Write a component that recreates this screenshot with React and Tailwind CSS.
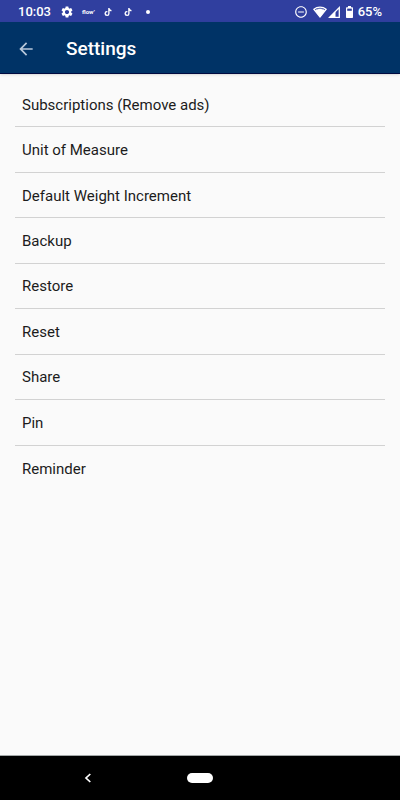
import { MdSettings, MdRemoveCircleOutline, MdArrowBack } from 'react-icons/md';
import { FaTiktok } from 'react-icons/fa6';

const items = [
    'Subscriptions (Remove ads)',
    'Unit of Measure',
    'Default Weight Increment',
    'Backup',
    'Restore',
    'Reset',
    'Share',
    'Pin',
    'Reminder',
];

function WifiIcon() {
    return (
        <svg width="14" height="12" viewBox="0 0 14 12" fill="none" stroke="currentColor">
            <path d="M.9 3.3C2.6 1.9 4.7 1.2 7 1.2s4.4.7 6.1 2.1L7 10.9z" strokeWidth="1.3" />
            <path d="M2.2 4.4C3.6 3.4 5.2 2.9 7 2.9s3.4.5 4.8 1.5L7 10.9z" fill="currentColor" strokeWidth="0.6" />
        </svg>
    );
}

function SignalIcon() {
    return (
        <svg width="12" height="12" viewBox="0 0 12 12">
            <path d="M1.6 11.3H11.3V1.6z" fill="none" stroke="currentColor" strokeWidth="1.3" />
            <path d="M1 11.6L7.5 5v6.6z" fill="currentColor" />
        </svg>
    );
}

function BatteryIcon() {
    return (
        <svg width="7" height="12" viewBox="0 0 7 12">
            <path d="M2 0h3v1.2h1.3c.4 0 .7.3.7.7v9.4c0 .4-.3.7-.7.7H.7c-.4 0-.7-.3-.7-.7V1.9c0-.4.3-.7.7-.7H2z" fill="currentColor" />
            <path d="M1.2 2.6h4.6v2.2H1.2z" fill="#303f9f" />
        </svg>
    );
}

function StatusBar() {
    return (
        <div className="flex h-[22px] items-center justify-between bg-[#303f9f] px-[18px] pt-px text-[13px] leading-4 font-medium text-white">
            <div className="flex items-center">
                <span className="w-[42px]">10:03</span>
                <MdSettings size={14} />
                <span className="ml-2 w-[22px] text-[6px] leading-3 font-bold">flow’</span>
                <FaTiktok size={8} />
                <FaTiktok size={8} className="ml-3" />
                <span className="ml-[14px] size-1 rounded-full bg-white" />
            </div>
            <div className="flex items-center">
                <MdRemoveCircleOutline size={14} />
                <span className="ml-[5px]"><WifiIcon /></span>
                <span className="ml-px"><SignalIcon /></span>
                <span className="ml-[6px]"><BatteryIcon /></span>
                <span className="ml-[5px]">65%</span>
            </div>
        </div>
    );
}

function AppBar() {
    return (
        <header className="flex h-[52px] items-center border-b border-[#000a40] bg-[#003366] pt-[2px] pl-4 text-white shadow-sm">
            <button type="button" aria-label="Back" className="text-[#b8c8da]">
                <MdArrowBack size={20} />
            </button>
            <h1 className="ml-[30px] text-[19px] leading-6 font-medium">Settings</h1>
        </header>
    );
}

function NavBar() {
    return (
        <nav className="grid h-[45px] grid-cols-3 items-center border-t border-[#a3a8a8] bg-black text-white">
            <button type="button" aria-label="Back" className="ml-[84px] w-2">
                <svg width="8" height="10" viewBox="0 0 8 10" fill="none" stroke="currentColor" strokeWidth="1.7">
                    <path d="M6.3 1L2 5l4.3 4" />
                </svg>
            </button>
            <button type="button" aria-label="Home" className="h-[10px] w-[26px] justify-self-center rounded-full bg-white" />
        </nav>
    );
}

export default function App() {
    return (
        <div className="flex min-h-screen flex-col bg-[#fafafa] font-['Roboto',sans-serif]">
            <StatusBar />
            <AppBar />
            <main className="flex-1 px-[15px] pt-2">
                <ul className="grid min-h-[409px] auto-rows-fr divide-y divide-[#d2d2d2]">
                    {items.map((item) => (
                        <li key={item} className="flex">
                            <button type="button" className="w-full px-[7px] pt-px text-left text-[15px] leading-5 text-[#1c1c1c]">
                                {item}
                            </button>
                        </li>
                    ))}
                </ul>
            </main>
            <NavBar />
        </div>
    );
}
